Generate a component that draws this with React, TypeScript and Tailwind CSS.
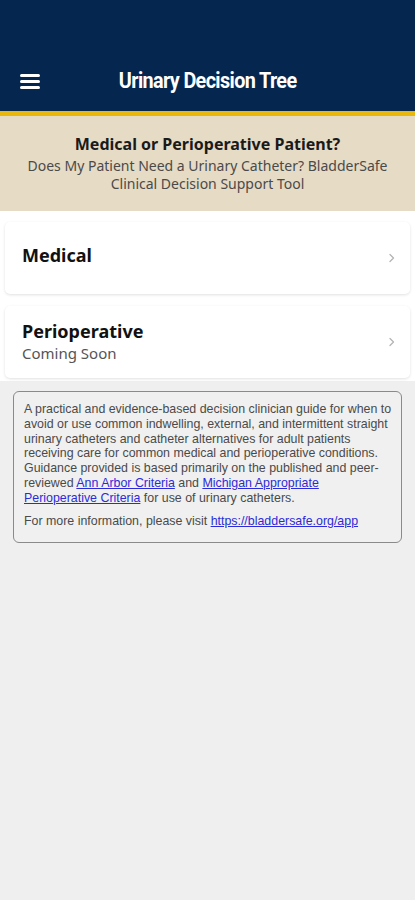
import React from "react";

function Chevron() {
  return (
    <svg width="8" height="12" viewBox="0 0 8 12" fill="none">
      <path d="M2 2.5 L5.5 6 L2 9.5" stroke="#b5b5b5" strokeWidth="1.3" strokeLinecap="round" strokeLinejoin="round" />
    </svg>
  );
}

export default function App() {
  const link = "text-[#2b2bd9] underline";
  return (
    <div className="w-[415px] h-[900px] bg-[#efefef] flex flex-col" style={{ fontFamily: '"Noto Sans", sans-serif' }}>
      <div className="h-[111px] bg-[#04264f] flex items-end pb-[14px] relative">
        <div className="absolute left-[20px] bottom-[22px] flex flex-col gap-[3px]">
          <div className="w-[20px] h-[3px] bg-white rounded-sm" />
          <div className="w-[20px] h-[3px] bg-white rounded-sm" />
          <div className="w-[20px] h-[3px] bg-white rounded-sm" />
        </div>
        <div className="w-full flex justify-center">
          <div className="inline-block text-white text-[22px] font-bold tracking-[-0.7px] scale-x-[0.9]" style={{ fontFamily: 'Roboto, sans-serif' }}>
            Urinary Decision Tree
          </div>
        </div>
      </div>
      <div className="h-[5px] bg-[#eab80d]" />
      <div className="h-[95px] bg-[#e6dbc5] flex flex-col items-center pt-[16px]">
        <div className="text-[16px] font-bold text-[#1a1a1a] leading-[24px]">Medical or Perioperative Patient?</div>
        <div className="text-[14px] text-[#4a4a4a] leading-[18px] text-center px-4 mt-[1px]">
          Does My Patient Need a Urinary Catheter? BladderSafe
          <br />
          Clinical Decision Support Tool
        </div>
      </div>
      <div className="bg-white px-[5px] pt-[11px] pb-[3px] flex flex-col gap-[12px]">
        <div className="h-[72px] bg-white rounded-[5px] shadow-[0_1px_3px_rgba(0,0,0,0.12)] flex items-center justify-between pl-[17px] pr-[14px]">
          <div className="text-[18px] font-bold text-[#111] -mt-[6px]">Medical</div>
          <Chevron />
        </div>
        <div className="h-[72px] bg-white rounded-[5px] shadow-[0_1px_3px_rgba(0,0,0,0.12)] flex items-center justify-between pl-[17px] pr-[14px]">
          <div className="flex flex-col -mt-[2px]">
            <div className="text-[18px] font-bold text-[#111] leading-[24px]">Perioperative</div>
            <div className="text-[15px] text-[#555] leading-[20px]">Coming Soon</div>
          </div>
          <Chevron />
        </div>
      </div>
      <div className="px-[13px] pt-[10px]">
        <div className="border border-[#8a8a8a] rounded-[6px] bg-[#f0f0f0] pl-[10px] pr-[6px] pt-[10px] pb-[14px] text-[12.4px] leading-[14.8px] text-[#4a4a4a] whitespace-nowrap" style={{ fontFamily: '"Liberation Sans", Arial, sans-serif' }}>
          <p>
            A practical and evidence-based decision clinician guide for when to
            <br />
            avoid or use common indwelling, external, and intermittent straight
            <br />
            urinary catheters and catheter alternatives for adult patients
            <br />
            receiving care for common medical and perioperative conditions.
            <br />
            Guidance provided is based primarily on the published and peer-
            <br />
            reviewed <span className={link}>Ann Arbor Criteria</span> and <span className={link}>Michigan Appropriate</span>
            <br />
            <span className={link}>Perioperative Criteria</span> for use of urinary catheters.
          </p>
          <p className="mt-[8px]">
            For more information, please visit <span className={link}>https://bladdersafe.org/app</span>
          </p>
        </div>
      </div>
    </div>
  );
}
